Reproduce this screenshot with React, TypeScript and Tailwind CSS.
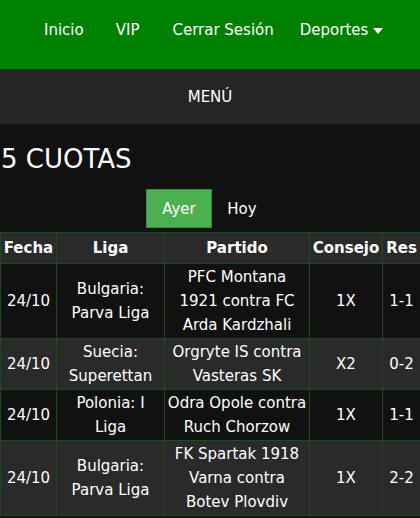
import React, { useState } from 'react'

type Fila = {
  fecha: string
  liga: string
  partido: string
  consejo: string
  res: string
}

const filas: Fila[] = [
  {
    fecha: '24/10',
    liga: 'Bulgaria: Parva Liga',
    partido: 'PFC Montana 1921 contra FC Arda Kardzhali',
    consejo: '1X',
    res: '1-1',
  },
  {
    fecha: '24/10',
    liga: 'Suecia: Superettan',
    partido: 'Orgryte IS contra Vasteras SK',
    consejo: 'X2',
    res: '0-2',
  },
  {
    fecha: '24/10',
    liga: 'Polonia: I Liga',
    partido: 'Odra Opole contra Ruch Chorzow',
    consejo: '1X',
    res: '1-1',
  },
  {
    fecha: '24/10',
    liga: 'Bulgaria: Parva Liga',
    partido: 'FK Spartak 1918 Varna contra Botev Plovdiv',
    consejo: '1X',
    res: '2-2',
  },
]

const App: React.FC = () => {
  const [tab, setTab] = useState<'ayer' | 'hoy'>('ayer')

  return (
    <div className="min-h-[518px] bg-[#111111] text-white font-['DejaVu_Sans',sans-serif] text-[15px] leading-6">
      {/* Barra superior */}
      <nav className="h-[69px] bg-[#008000] flex items-start pt-[18px] pl-[44px]">
        <a className="text-white">Inicio</a>
        <a className="text-white ml-[32px]">VIP</a>
        <a className="text-white ml-[33px]">Cerrar Sesión</a>
        <a className="text-white ml-[26px] flex items-center">
          Deportes
          <svg className="ml-[5px] mt-[1px]" width="10" height="6" viewBox="0 0 10 6">
            <path d="M0 0h10L5 6z" fill="currentColor" />
          </svg>
        </a>
      </nav>

      <div className="h-[55px] bg-[#262626] flex items-center justify-center">
        MENÚ
      </div>

      <h1 className="mt-[20px] pl-[1px] text-[26px] leading-[30px] font-normal">
        5 CUOTAS
      </h1>

      {/* Pestañas */}
      <div className="mt-[15px] flex justify-center pl-[4px]">
        <button
          onClick={() => setTab('ayer')}
          className={
            tab === 'ayer'
              ? 'w-[66px] h-[39px] bg-[#4caf50] border border-[#3d8b40] text-white'
              : 'w-[66px] h-[39px] border border-transparent text-white'
          }
        >
          Ayer
        </button>
        <button
          onClick={() => setTab('hoy')}
          className={
            tab === 'hoy'
              ? 'w-[66px] h-[39px] bg-[#4caf50] border border-[#3d8b40] text-white'
              : 'w-[66px] h-[39px] border border-transparent text-white pr-[6px]'
          }
        >
          Hoy
        </button>
      </div>

      <table className="mt-[4px] w-full table-fixed border-collapse text-center">
        <colgroup>
          <col className="w-[56px]" />
          <col className="w-[108px]" />
          <col className="w-[145px]" />
          <col className="w-[73px]" />
          <col className="w-[38px]" />
        </colgroup>
        <thead>
          <tr className="bg-[#2a2a2a]">
            <th className="border border-[#1f4a1f] py-[3px] px-0 font-bold">Fecha</th>
            <th className="border border-[#1f4a1f] py-[3px] px-0 font-bold">Liga</th>
            <th className="border border-[#1f4a1f] py-[3px] px-0 font-bold">Partido</th>
            <th className="border border-[#1f4a1f] py-[3px] px-0 font-bold">Consejo</th>
            <th className="border border-[#1f4a1f] py-[3px] px-0 font-bold">Res</th>
          </tr>
        </thead>
        <tbody>
          {filas.map((f, i) => (
            <tr key={i} className={i % 2 === 0 ? 'bg-[#111111]' : 'bg-[#2a2a2a]'}>
              <td className="border border-[#1f4a1f] py-px px-0">{f.fecha}</td>
              <td className="border border-[#1f4a1f] py-px px-[2px]">{f.liga}</td>
              <td className="border border-[#1f4a1f] py-px px-[2px]">{f.partido}</td>
              <td className="border border-[#1f4a1f] py-px px-0">{f.consejo}</td>
              <td className="border border-[#1f4a1f] py-px px-0">{f.res}</td>
            </tr>
          ))}
        </tbody>
      </table>
    </div>
  )
}

export default App
